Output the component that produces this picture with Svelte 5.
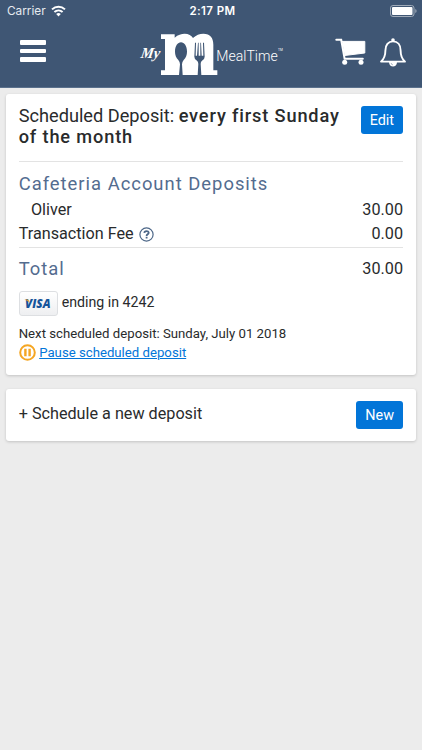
<script lang="ts">
  interface LineItem {
    label: string;
    amount: string;
    indent?: boolean;
    help?: boolean;
  }

  const items: LineItem[] = [
    { label: 'Oliver', amount: '30.00', indent: true },
    { label: 'Transaction Fee', amount: '0.00', help: true },
  ];
</script>

<div class="screen">
  <header>
    <div class="status-bar">
      <span class="carrier">
        Carrier
        <svg width="15" height="12" viewBox="0 0 15 12" fill="none" stroke="#fff" stroke-width="2">
          <path d="M1 4.4C4.8.7 10.2.7 14 4.4" />
          <path d="M3.4 7.1c2.4-2.1 5.8-2.1 8.2 0" />
          <path d="M5.2 9c1.4-1.2 3.2-1.2 4.6 0L7.5 11.4z" fill="#fff" stroke="none" />
        </svg>
      </span>
      <span class="time">2:17 PM</span>
      <svg class="battery" width="28" height="12" viewBox="0 0 28 12">
        <rect x=".5" y=".5" width="23.5" height="11" rx="2.5" fill="none" stroke="#a0abb9" />
        <rect x="2" y="2" width="20.5" height="8" rx="1" fill="#fff" />
        <path d="M25.3 4v4c1.7-.6 1.7-3.4 0-4z" fill="#a0abb9" />
      </svg>
    </div>

    <nav>
      <button class="menu" aria-label="Menu">
        <i></i><i></i><i></i>
      </button>

      <!-- Logo -->
      <svg class="logo" width="160" height="60" viewBox="0 0 480 180" fill="#fff">
        <text class="script" transform="translate(31 100) skewX(-10)" textLength="57" lengthAdjust="spacingAndGlyphs">My</text>
        <path d="M93 28H134V38C144 29 154 26 164 26C176 26 184 31 189 39C198 30 209 26 220 26C241 26 250 39 250 59V136H262V150H214L212 117Q212 110 216 107Q224 103 224 95L222 53H219L220 92H215L213 53H211L211 92H206L206 53H204L201 92H197L198 53H195L193 95Q193 103 201 107Q205 110 205 117L203 150H158L156 118Q156 111 161 105C168 98 171 89 171 80C171 63 163 52 153 52C143 52 135 63 135 80C135 89 138 98 145 105Q150 111 150 118L147 150H93V136H105V42H93Z" />
        <text class="brand" x="259" y="107" textLength="184" lengthAdjust="spacingAndGlyphs">MealTime</text>
        <text class="tm" x="444" y="77" textLength="14" lengthAdjust="spacingAndGlyphs">TM</text>
      </svg>

      <div class="actions">
        <svg width="32" height="28" viewBox="0 0 32 28" fill="none" stroke="#fff" stroke-width="2" stroke-linecap="round">
          <path d="M1.3 1.8H6.2L9.6 20.8H27.8" />
          <path d="M7.2 3.4H29.8V15L9.6 17.5Z" fill="#fff" stroke-width="1" stroke-linejoin="round" />
          <circle cx="9.7" cy="24.2" r="2.5" fill="#fff" stroke="none" />
          <circle cx="26" cy="24.2" r="2.5" fill="#fff" stroke="none" />
        </svg>
        <svg width="28" height="30" viewBox="0 0 28 30" fill="none" stroke="#fff" stroke-width="1.9" stroke-linejoin="round">
          <path d="M2 23.6C5.5 20.4 6.4 17.4 6.4 12.4C6.4 7.1 9.2 3.4 14 3.4S21.6 7.1 21.6 12.4C21.6 17.4 22.5 20.4 26 23.6Z" />
          <circle cx="14" cy="2.1" r="1.8" fill="#fff" stroke="none" />
          <path d="M10 24C10 30 18 30 18 24Z" fill="#fff" stroke="none" />
          <path d="M12.2 25.2q.2 1.4 1.6 1.7" stroke="#3f5674" stroke-width=".5" />
        </svg>
      </div>
    </nav>
  </header>

  <main>
    <section class="card deposit">
      <div class="title-row">
        <h2>Scheduled Deposit: <strong>every first Sunday of the month</strong></h2>
        <button class="btn">Edit</button>
      </div>

      <h3>Cafeteria Account Deposits</h3>
      {#each items as item}
        <div class="line" class:indent={item.indent}>
          <span class="label">
            {item.label}
            {#if item.help}
              <svg width="15" height="15" viewBox="0 0 15 15" fill="none" stroke="#4d6788">
                <circle cx="7.5" cy="7.5" r="6.6" stroke-width="1.2" />
                <path d="M5.3 5.9C5.4 3.5 9.7 3.5 9.7 5.8C9.7 7.3 7.6 7.3 7.6 8.9" stroke-width="1.8" />
                <path d="M7.6 9.8v1.7" stroke-width="1.8" />
              </svg>
            {/if}
          </span>
          <span>{item.amount}</span>
        </div>
      {/each}

      <div class="total">
        <h3>Total</h3>
        <span>30.00</span>
      </div>

      <div class="payment">
        <span class="visa">
          <svg width="28" height="20" viewBox="0 0 28 20">
            <text x="1" y="14.8" textLength="25.5" lengthAdjust="spacingAndGlyphs">VISA</text>
            <path d="M.4 6.4H3.4Q4.6 6.4 4.9 7.7L5.2 9.6Q3.7 7.4.4 6.4Z" fill="#e5a22d" />
          </svg>
        </span>
        ending in 4242
      </div>

      <p class="next">Next scheduled deposit: Sunday, July 01 2018</p>
      <div class="pause">
        <svg width="17" height="17" viewBox="0 0 17 17">
          <circle cx="8.5" cy="8.5" r="7.3" fill="#fff" stroke="#f5a623" stroke-width="2" />
          <path d="M5.2 4.8h2.4v7.4H5.2zM9.4 4.8h2.4v7.4H9.4z" fill="#f5a623" />
        </svg>
        <a href="#pause">Pause scheduled deposit</a>
      </div>
    </section>

    <section class="card new-deposit">
      <span>+ Schedule a new deposit</span>
      <button class="btn">New</button>
    </section>
  </main>
</div>

<style>
  :global(body) {
    background: #ececec;
  }

  .screen {
    min-height: 750px;
    background: #ececec;
    color: #292b2c;
    font-family: Roboto, sans-serif;
    font-size: 16.2px;
  }

  header {
    height: 88px;
    box-sizing: border-box;
    background: #3f5674;
    border-bottom: 1px solid #5b718d;
    color: #fff;
  }

  .status-bar {
    display: grid;
    grid-template-columns: 1fr auto 1fr;
    align-items: center;
    height: 22px;
    padding: 0 4px 0 7px;
    font-family: Inter, sans-serif;
  }

  .carrier {
    display: flex;
    align-items: center;
    gap: 5px;
    font-size: 11.8px;
    color: #e6eaf0;
  }

  .time {
    font-weight: 600;
    font-size: 11.5px;
    letter-spacing: 0.4px;
  }

  .battery {
    justify-self: end;
  }

  nav {
    display: flex;
    align-items: flex-start;
    height: 65px;
    padding-top: 3px;
    box-sizing: border-box;
  }

  .menu {
    display: flex;
    flex-direction: column;
    gap: 4px;
    width: 26px;
    margin: 15px 83.6px 0 20.4px;
    padding: 0;
    background: none;
    border: none;
  }

  .menu i {
    height: 4.6px;
    border-radius: 1px;
    background: #fff;
  }

  .logo {
    flex: none;
  }

  .script {
    font: italic 700 46px 'Liberation Serif', serif;
  }

  .brand {
    font: 300 45px Roboto, sans-serif;
  }

  .tm {
    font: 400 10px Roboto, sans-serif;
  }

  .actions {
    display: flex;
    gap: 12.5px;
    margin: 13px 0 0 45px;
  }

  main {
    display: flex;
    flex-direction: column;
    gap: 14px;
    padding: 6px;
  }

  .card {
    box-sizing: border-box;
    background: #fff;
    border-radius: 3px;
    box-shadow: 0 1px 3px rgba(0, 0, 0, 0.18);
  }

  .deposit {
    height: 281px;
    padding: 12px 13px 0 12.7px;
  }

  .title-row {
    display: flex;
    justify-content: space-between;
    align-items: flex-start;
    height: 55px;
    border-bottom: 1px solid #e3e3e3;
  }

  h2 {
    width: 330px;
    margin: 0;
    font-size: 18.2px;
    font-weight: 400;
    line-height: 20.6px;
  }

  h2 strong {
    font-weight: 500;
    letter-spacing: 0.85px;
  }

  h3 {
    margin: 0;
    color: #536c8f;
    font-size: 18.4px;
    font-weight: 400;
    letter-spacing: 1px;
    line-height: 24px;
  }

  .deposit > h3 {
    margin: 10px 0 2px;
  }

  .btn {
    height: 28px;
    padding: 0 9px;
    border: none;
    border-radius: 3px;
    background: #0275d8;
    color: #fff;
    font: 14.4px Roboto, sans-serif;
  }

  .line {
    display: flex;
    justify-content: space-between;
    line-height: 24.4px;
  }

  .indent {
    padding-left: 12.3px;
  }

  .label {
    display: flex;
    align-items: center;
    gap: 5px;
  }

  .total {
    display: flex;
    justify-content: space-between;
    height: 44px;
    padding-top: 10px;
    box-sizing: border-box;
    border-top: 1px solid #e3e3e3;
    line-height: 21px;
  }

  .total h3 {
    line-height: 22px;
  }

  .payment {
    display: flex;
    gap: 4px;
    font-size: 14.2px;
    line-height: 22px;
  }

  .visa {
    display: flex;
    align-items: center;
    justify-content: center;
    width: 37px;
    height: 23px;
    border: 1px solid #dddfe2;
    border-radius: 3px;
    background: linear-gradient(#fff, #eeeff1);
  }

  .visa text {
    font: italic 800 11.5px 'Open Sans', sans-serif;
    fill: #15549a;
  }

  .next {
    margin: 9px 0 2px;
    font-size: 13.2px;
    line-height: 17px;
  }

  .pause {
    display: flex;
    align-items: center;
    gap: 3.5px;
    font-size: 13.2px;
  }

  .pause a {
    color: #0275d8;
  }

  .new-deposit {
    display: flex;
    justify-content: space-between;
    height: 52px;
    padding: 12px 13px 12px 12.7px;
  }

  .new-deposit span {
    line-height: 25px;
  }
</style>
